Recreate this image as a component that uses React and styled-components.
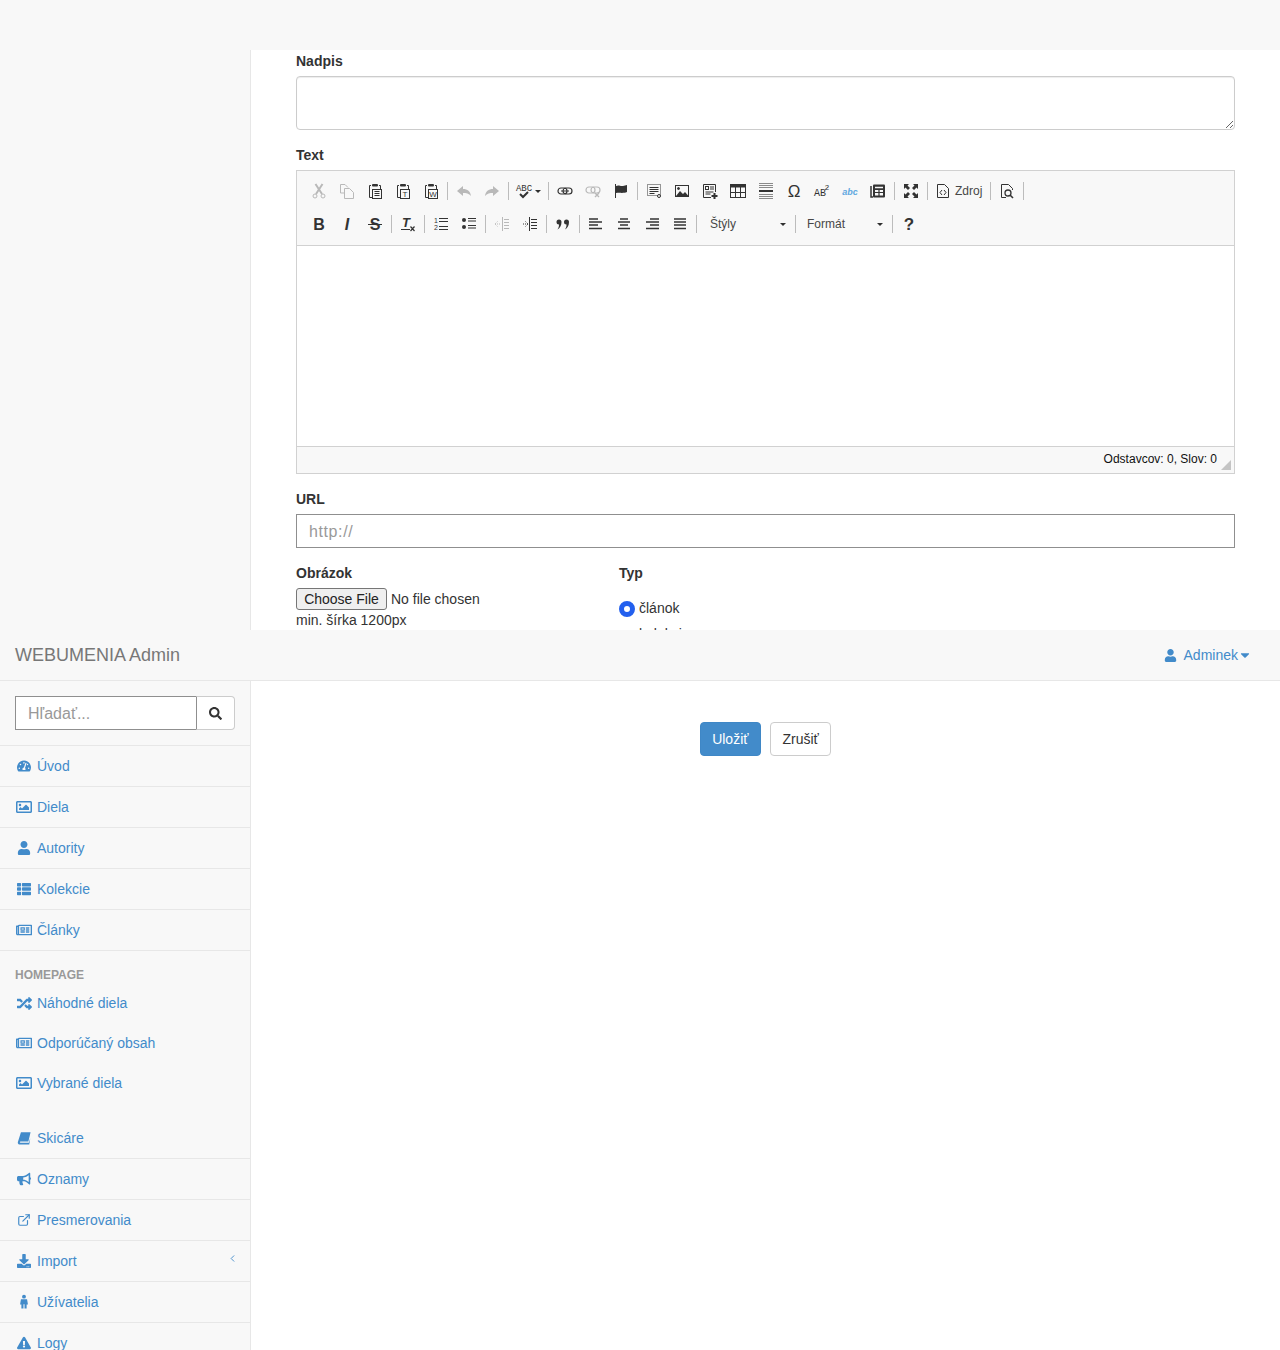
import React from 'react';
import styled, { createGlobalStyle } from 'styled-components';
import {
  FaTachometerAlt, FaRegImage, FaUser, FaThList, FaRegNewspaper, FaRandom,
  FaBullhorn, FaDownload, FaExclamationTriangle, FaSearch, FaCaretDown,
} from 'react-icons/fa';
import { FiExternalLink, FiChevronLeft } from 'react-icons/fi';

const GlobalStyle = createGlobalStyle`
  html, body { margin: 0; padding: 0; background: #fff; }
  body {
    font-family: "Liberation Sans", Arial, sans-serif;
    font-size: 14px;
    line-height: 20px;
    color: #333;
  }
  * { box-sizing: border-box; }
`;

const Page = styled.div`
  height: 1350px;
  overflow: hidden;
  display: flex;
  flex-direction: column;
`;

const TopBand = styled.div`
  height: 50px;
  flex: none;
  background: #f8f8f8;
`;

const Row = styled.div`
  display: flex;
  flex: ${(p) => (p.$fill ? '1' : 'none')};
  height: ${(p) => (p.$h ? `${p.$h}px` : 'auto')};
  overflow: hidden;
`;

const Sidebar = styled.aside`
  width: 251px;
  flex: none;
  background: #f8f8f8;
  border-right: 1px solid #e7e7e7;
`;

const Content = styled.main`
  flex: 1;
  padding: 1px 45px 0;
`;

const Group = styled.div`
  margin-bottom: 15px;
`;

const Label = styled.label`
  display: block;
  font-weight: 700;
  margin-bottom: 5px;
`;

const Area = styled.textarea`
  display: block;
  width: 100%;
  height: 54px;
  border: 1px solid #ccc;
  border-radius: 4px;
  box-shadow: inset 0 1px 1px rgba(0, 0, 0, 0.075);
  background: #fff;
  outline: none;
`;

const Editor = styled.div`
  border: 1px solid #d1d1d1;
`;

const Toolbar = styled.div`
  background: #f8f8f8;
  padding: 3px 0 5px 8px;
  border-bottom: 1px solid #d1d1d1;
`;

const ToolRow = styled.div`
  display: flex;
  align-items: center;
  height: ${(p) => p.$h}px;
`;

const Tool = styled.span`
  flex: none;
  width: ${(p) => p.$w || 28}px;
  height: 18px;
  display: flex;
  align-items: center;
  justify-content: ${(p) => (p.$w ? 'flex-start' : 'center')};
  padding-left: ${(p) => (p.$w ? '5px' : '0')};
  color: ${(p) => (p.$off ? '#b9b9b9' : '#333')};
  font-size: 12px;
  svg { flex: none; display: block; overflow: visible; }
`;

const ToolText = styled.span`
  margin-left: 4px;
  color: #474747;
`;

const ToolCaret = styled.i`
  flex: none;
  margin-left: 3px;
  border-top: 3px solid #2f2f2f;
  border-left: 3px solid transparent;
  border-right: 3px solid transparent;
`;

const Sep = styled.span`
  flex: none;
  width: 1px;
  height: 18px;
  margin: 0 2px;
  background: #bcbcbc;
`;

const Combo = styled.span`
  flex: none;
  width: ${(p) => p.$w}px;
  padding-left: ${(p) => p.$pad}px;
  padding-right: 7px;
  display: flex;
  align-items: center;
  justify-content: space-between;
  font-size: 12px;
  color: #474747;
`;

const EditorBody = styled.div`
  height: 200px;
  background: #fff;
`;

const EditorFoot = styled.div`
  height: 27px;
  padding: 0 3px 3px 0;
  background: #f8f8f8;
  border-top: 1px solid #d1d1d1;
  display: flex;
  align-items: center;
  justify-content: flex-end;
  font-size: 12px;
  color: #111;
`;

const Grip = styled.i`
  width: 0;
  height: 0;
  margin: 13px 0 0 4px;
  border-bottom: 10px solid #c4c4c4;
  border-left: 10px solid transparent;
`;

const UrlInput = styled.input`
  display: block;
  width: 100%;
  height: 34px;
  padding: 7px 12px 5px;
  border: 1px solid #8f8f8f;
  font: 16px "Liberation Sans", Arial, sans-serif;
  outline: none;
  &::placeholder { color: #999; letter-spacing: 0.6px; }
`;

const Columns = styled.div`
  display: grid;
  grid-template-columns: 323px 1fr;
`;

const FileInput = styled.input`
  display: block;
  height: 22px;
  font: 14px "Liberation Sans", Arial, sans-serif;
  color: #333;
  &::file-selector-button {
    width: 91px;
    height: 22px;
    margin-right: 4px;
    padding: 0;
    background: #efefef;
    border: 1px solid #767676;
    border-radius: 3px;
    font: 14px "Liberation Sans", Arial, sans-serif;
    color: #222;
  }
`;

const Hint = styled.p`
  margin: 0;
`;

const RadioRow = styled.label`
  display: flex;
  align-items: flex-start;
  height: 20px;
  margin-top: ${(p) => p.$top}px;
`;

const Radio = styled.input`
  appearance: none;
  width: 16px;
  height: 16px;
  margin: ${(p) => p.$drop}px 4px 0 0;
  border-radius: 50%;
  background: #fff;
  border: 1px solid #767676;
  &:checked { border: 5px solid #2360ee; }
`;

const NavBar = styled.header`
  height: 51px;
  flex: none;
  padding: 0 28px 0 15px;
  background: #f8f8f8;
  border-bottom: 1px solid #e7e7e7;
  display: flex;
  align-items: center;
  justify-content: space-between;
`;

const Brand = styled.a`
  font-size: 18px;
  color: #777;
`;

const UserMenu = styled.a`
  display: flex;
  align-items: center;
  color: #428bca;
`;

const UserName = styled.span`
  margin-left: 7px;
`;

const SearchBox = styled.div`
  display: flex;
  height: 65px;
  padding: 15px;
  border-bottom: 1px solid #e7e7e7;
`;

const SearchInput = styled.input`
  width: 181px;
  height: 34px;
  padding: 7px 12px 5px;
  border: 1px solid #8f8f8f;
  border-right: 0;
  font: 16px "Liberation Sans", Arial, sans-serif;
  outline: none;
  &::placeholder { color: #999; }
`;

const SearchButton = styled.span`
  width: 39px;
  height: 34px;
  display: flex;
  align-items: center;
  justify-content: center;
  background: #fff;
  border: 1px solid #ccc;
  border-left: 1px solid #8f8f8f;
  border-radius: 0 4px 4px 0;
  color: #333;
`;

const NavItem = styled.a`
  display: flex;
  align-items: center;
  height: ${(p) => (p.$plain ? 40 : 41)}px;
  padding: 0 0 ${(p) => (p.$plain ? 0 : 1)}px 15px;
  color: #428bca;
  border-bottom: ${(p) => (p.$plain ? '0' : '1px solid #e7e7e7')};
`;

const NavIcon = styled.span`
  width: 18px;
  margin-right: 4px;
  display: flex;
  justify-content: center;
  flex: none;
`;

const NavArrow = styled.span`
  margin: 0 12px 5px auto;
  display: flex;
`;

const NavHeading = styled.div`
  padding-top: 15px;
  height: 32px;
  margin-left: 15px;
  font-size: 12px;
  line-height: 18px;
  font-weight: 700;
  color: #999;
`;

const SubGap = styled.div`
  height: 15px;
`;

const Actions = styled.div`
  flex: 1;
  padding-top: 41px;
  display: flex;
  justify-content: center;
  align-items: flex-start;
  gap: 9px;
`;

const Button = styled.button`
  height: 34px;
  padding: 6px 11.5px;
  border-radius: 4px;
  border: 1px solid ${(p) => (p.$primary ? '#3f87c6' : '#ccc')};
  background: ${(p) => (p.$primary ? '#428bca' : '#fff')};
  color: ${(p) => (p.$primary ? '#fff' : '#333')};
  font: 14px "Liberation Sans", Arial, sans-serif;
`;

const Svg = ({ children, size = 16 }) => (
  <svg width={size} height={size} viewBox="0 0 16 16" fill="none" stroke="currentColor" strokeWidth="1">
    {children}
  </svg>
);

const Glyph = ({ x = 8, y = 13, size = 15, weight = 700, style = 'normal', family = 'Liberation Sans', children, fill = 'currentColor' }) => (
  <text x={x} y={y} textAnchor="middle" fontSize={size} fontWeight={weight} fontStyle={style} fontFamily={family} fill={fill} stroke="none">
    {children}
  </text>
);

const Clip = ({ children }) => (
  <Svg>
    <path d="M4 2.500H2.500v12H5M12 2.500h1.500V6" />
    <rect x="5" y="1" width="6" height="2.500" rx="1" fill="currentColor" stroke="none" />
    <rect x="5.500" y="6.500" width="9" height="9" fill="#f8f8f8" />
    {children}
  </Svg>
);

const icons = {
  cut: (
    <Svg>
      <circle cx="4" cy="13" r="2" />
      <circle cx="12" cy="13" r="2" />
      <path d="M5 11 11.500 1M11 11 4.500 1" strokeWidth="2" />
    </Svg>
  ),
  copy: (
    <Svg>
      <path d="M5 10H1.500V1.500H6L9 4.500" />
      <path d="M5.500 5.500h5l4 4v6h-9z" fill="#f8f8f8" />
    </Svg>
  ),
  paste: <Clip><path d="M7.500 8.500h5M7.500 10.500h5M7.500 12.500h5" /></Clip>,
  pasteText: <Clip><Glyph x={10} y={14} size={8} weight={400}>T</Glyph></Clip>,
  pasteWord: <Clip><Glyph x={10} y={14} size={8} weight={400}>W</Glyph></Clip>,
  undo: (
    <Svg>
      <path d="M7 3 1 8l6 5v-3c3 0 6 .5 8 3-.5-4.500-3.500-7-8-7z" fill="currentColor" stroke="none" />
    </Svg>
  ),
  redo: (
    <Svg>
      <path d="M9 3l6 5-6 5v-3c-3 0-6 .5-8 3 .5-4.500 3.500-7 8-7z" fill="currentColor" stroke="none" />
    </Svg>
  ),
  spell: (
    <Svg>
      <Glyph y={8} size={9} weight={400} family="Liberation Mono">ABC</Glyph>
      <path d="M4 11l3 3 5-5" strokeWidth="2" />
    </Svg>
  ),
  link: (
    <Svg>
      <rect x="1" y="5" width="9" height="6" rx="3" strokeWidth="1.200" />
      <rect x="6" y="5" width="9" height="6" rx="3" strokeWidth="1.200" />
      <path d="M4 8h8" />
    </Svg>
  ),
  unlink: (
    <Svg>
      <rect x="1" y="4" width="9" height="6" rx="3" strokeWidth="1.200" />
      <rect x="6" y="4" width="9" height="6" rx="3" strokeWidth="1.200" />
      <path d="M10 10l4 4M14 10l-4 4" strokeWidth="1.400" />
    </Svg>
  ),
  anchor: (
    <Svg>
      <path d="M2.500 1v14" />
      <path d="M3 3c3-1.500 4 .5 7 0l4-1v7c-3 1.500-7 .500-11 1z" fill="currentColor" stroke="none" />
    </Svg>
  ),
  form: (
    <Svg>
      <rect x="1.500" y="1.500" width="13" height="11" strokeDasharray="1 1" />
      <path d="M3.500 4.500h9M3.500 6.500h9M3.500 8.500h9M3.500 10.500h5" />
      <circle cx="13" cy="13" r="1.500" fill="#f8f8f8" />
    </Svg>
  ),
  image: (
    <Svg>
      <rect x="1.500" y="2.500" width="13" height="11" />
      <circle cx="4.500" cy="5.500" r="1" fill="currentColor" />
      <path d="M2 13l4-5 3 3 2-2 3.500 4z" fill="currentColor" stroke="none" />
    </Svg>
  ),
  template: (
    <Svg>
      <path d="M9 14.500H1.500v-13h12V9" />
      <rect x="3.500" y="3.500" width="3" height="3" />
      <path d="M8 4h4M8 6h4M3.500 9h8M3.500 11h5" />
      <path d="M12.500 10v6M9.500 13h6" strokeWidth="2" />
    </Svg>
  ),
  table: (
    <Svg>
      <rect x="0.500" y="1.500" width="15" height="13" />
      <path d="M1 3h14" strokeWidth="3" />
      <path d="M5.500 2v12M10.500 2v12M1 9.500h14" />
    </Svg>
  ),
  hr: (
    <Svg>
      <path d="M1 0.500h14M1 2.500h14M1 4.500h14M1 11.500h14M1 13.500h14M1 15.500h14" stroke="#8a8a8a" />
      <path d="M1 8h14" strokeWidth="2" />
    </Svg>
  ),
  omega: <Svg><Glyph y={14} size={17} weight={400}>Ω</Glyph></Svg>,
  abbr: (
    <Svg>
      <Glyph x={6} y={13} size={10} weight={400} family="Liberation Mono">AB</Glyph>
      <Glyph x={13} y={7} size={8} weight={400} family="Liberation Mono">2</Glyph>
    </Svg>
  ),
  scayt: <Svg><Glyph y={12} size={9} style="italic" fill="#62a8e0">abc</Glyph></Svg>,
  news: (
    <Svg>
      <path d="M1 3v11h2" strokeWidth="1.500" />
      <rect x="3" y="1.500" width="12" height="13" rx="1" fill="currentColor" stroke="none" />
      <path d="M5 4.500h8" stroke="#f8f8f8" strokeWidth="1.500" />
      <rect x="5" y="7" width="8" height="5.500" fill="#f8f8f8" stroke="none" />
      <path d="M5 9.500h8M9 7v6" strokeWidth="1.200" />
    </Svg>
  ),
  maximize: (
    <Svg>
      <path d="M1 1h5L4.500 2.500 7 5 5 7 2.500 4.500 1 6zM15 1v5l-1.500-1.500L11 7 9 5l2.500-2.500L10 1zM1 15v-5l1.500 1.500L5 9l2 2-2.500 2.500L6 15zM15 15h-5l1.500-1.500L9 11l2-2 2.500 2.500L15 10z" fill="currentColor" stroke="none" />
    </Svg>
  ),
  source: (
    <Svg>
      <path d="M2.500 1.500h7l4 4v9h-11z" />
      <path d="M7 7 5 9.500 7 12M9 7l2 2.500L9 12" />
    </Svg>
  ),
  preview: (
    <Svg>
      <path d="M7 14.500H2.500v-13h7l4 4V7" />
      <circle cx="9" cy="10" r="3" strokeWidth="1.300" />
      <path d="M11 12l3 3" strokeWidth="1.600" />
    </Svg>
  ),
  bold: <Svg><Glyph y={14} size={16}>B</Glyph></Svg>,
  italic: <Svg><Glyph y={14} size={16} style="italic">I</Glyph></Svg>,
  strike: (
    <Svg>
      <Glyph y={14} size={16}>S</Glyph>
      <path d="M1 8.500h14" />
    </Svg>
  ),
  clear: (
    <Svg>
      <Glyph x={6} y={11} size={13} style="italic">T</Glyph>
      <path d="M1 13.500h9M10.500 10.500l4 4.500M14.500 10.500l-4 4.500" strokeWidth="1.200" />
    </Svg>
  ),
  ol: (
    <Svg>
      <Glyph x={3} y={7} size={7} weight={400}>1</Glyph>
      <Glyph x={3} y={14} size={7} weight={400}>2</Glyph>
      <path d="M6 2.500h9M6 5.500h9M6 10.500h9M6 13.500h9" />
    </Svg>
  ),
  ul: (
    <Svg>
      <circle cx="3" cy="4" r="2" fill="currentColor" stroke="none" />
      <circle cx="3" cy="11" r="2" fill="currentColor" stroke="none" />
      <path d="M7 2.500h8M7 5h8M7 9.500h8M7 12h8" />
    </Svg>
  ),
  outdent: (
    <Svg>
      <path d="M8.500 1v14" />
      <path d="M10 3.500h5M10 6.500h5M10 9.500h5M10 12.500h5" />
      <path d="M1 8h5M3.500 5.500 1 8l2.500 2.500" strokeDasharray="1 1" />
    </Svg>
  ),
  indent: (
    <Svg>
      <path d="M7.500 1v14" />
      <path d="M9 3.500h6M9 6.500h6M9 9.500h6M9 12.500h6" />
      <path d="M1 8h5M3.500 5.500 6 8l-2.500 2.500" strokeDasharray="1 1" />
    </Svg>
  ),
  quote: (
    <Svg>
      <path d="M4 3.500a2.500 2.500 0 0 1 2.500 2.500c0 3.500-1.500 6-4 7.500 1-1.500 1.500-3 1.500-5A2.500 2.500 0 0 1 4 3.500zM11.500 3.500A2.500 2.500 0 0 1 14 6c0 3.500-1.500 6-4 7.500 1-1.500 1.500-3 1.500-5a2.500 2.500 0 0 1 0-5z" fill="currentColor" stroke="none" />
    </Svg>
  ),
  left: <Svg><path d="M1 3h9M1 6h13M1 9h9M1 12.500h13" strokeWidth="1.500" /></Svg>,
  center: <Svg><path d="M4 3h8M2 6h12M4 9h8M2 12.500h12" strokeWidth="1.500" /></Svg>,
  right: <Svg><path d="M6 3h9M2 6h13M6 9h9M2 12.500h13" strokeWidth="1.500" /></Svg>,
  justify: <Svg><path d="M2 3h12M2 6h12M2 9h12M2 12.500h12" strokeWidth="1.500" /></Svg>,
  help: <Svg><Glyph y={14} size={17}>?</Glyph></Svg>,
};

const rowOne = [
  ['cut', 1], ['copy', 1], ['paste'], ['pasteText'], ['pasteWord'], '|',
  ['undo', 1], ['redo', 1], '|',
  'spell', '|',
  ['link'], ['unlink', 1], ['anchor'], '|',
  ['form'], ['image'], ['template'], ['table'], ['hr'], ['omega'], ['abbr'], ['scayt'], ['news'], '|',
  ['maximize'], '|',
  'source', '|',
  ['preview'], '|',
];

const rowTwo = [
  ['bold'], ['italic'], ['strike'], '|',
  ['clear'], '|',
  ['ol'], ['ul'], '|',
  ['outdent', 1], ['indent'], '|',
  ['quote'], '|',
  ['left'], ['center'], ['right'], ['justify'], '|',
  'styles', '|',
  'format', '|',
  ['help'],
];

const renderTool = (item, i) => {
  if (item === '|') return <Sep key={i} />;
  if (item === 'spell') return <Tool key={i} $w={35}>{icons.spell}<ToolCaret /></Tool>;
  if (item === 'source') return <Tool key={i} $w={58}>{icons.source}<ToolText>Zdroj</ToolText></Tool>;
  if (item === 'styles') return <Combo key={i} $w={94} $pad={11}>Štýly<ToolCaret /></Combo>;
  if (item === 'format') return <Combo key={i} $w={92} $pad={9}>Formát<ToolCaret /></Combo>;
  return <Tool key={i} $off={item[1]}>{icons[item[0]]}</Tool>;
};

// FA5 has no slanted book or wide male figure like the old set
const BookIcon = () => (
  <svg width="14" height="14" viewBox="0 0 16 16" fill="currentColor">
    <path d="M4.500 1.500H15.500L13 12H4c-1 0-1 1.500 0 1.500h9.500l1.500-5v1l-1 6H3.500C1.500 15.500.5 14 1 12.500z" />
  </svg>
);

const MaleIcon = () => (
  <svg width="14" height="15" viewBox="0 0 16 16" fill="currentColor">
    <circle cx="8" cy="2.500" r="2.200" />
    <path d="M4.500 5.500h7l1 6H11V16H8.600v-5h-1.200v5H5v-4.500H3.500z" />
  </svg>
);

const WideImage = () => <FaRegImage size={16} />;
const WideNews = () => <FaRegNewspaper size={16} />;
const WideRandom = () => <FaRandom size={15} />;

const mainNav = [
  [FaTachometerAlt, 'Úvod'],
  [WideImage, 'Diela'],
  [FaUser, 'Autority'],
  [FaThList, 'Kolekcie'],
  [WideNews, 'Články'],
];

const homeNav = [
  [WideRandom, 'Náhodné diela'],
  [WideNews, 'Odporúčaný obsah'],
  [WideImage, 'Vybrané diela'],
];

const lowerNav = [
  [BookIcon, 'Skicáre'],
  [FaBullhorn, 'Oznamy'],
  [FiExternalLink, 'Presmerovania'],
  [FaDownload, 'Import', true],
  [MaleIcon, 'Užívatelia'],
  [FaExclamationTriangle, 'Logy'],
];

const Item = ({ icon: Icon, label, plain, arrow }) => (
  <NavItem $plain={plain}>
    <NavIcon><Icon size={14} /></NavIcon>
    {label}
    {arrow && <NavArrow><FiChevronLeft size={11} /></NavArrow>}
  </NavItem>
);

export default function App() {
  return (
    <Page>
      <GlobalStyle />
      <TopBand />
      <Row $h={580}>
        <Sidebar />
        <Content>
          <Group>
            <Label>Nadpis</Label>
            <Area />
          </Group>
          <Group>
            <Label>Text</Label>
            <Editor>
              <Toolbar>
                <ToolRow $h={34}>{rowOne.map(renderTool)}</ToolRow>
                <ToolRow $h={32}>{rowTwo.map(renderTool)}</ToolRow>
              </Toolbar>
              <EditorBody />
              <EditorFoot>
                Odstavcov: 0, Slov: 0
                <Grip />
              </EditorFoot>
            </Editor>
          </Group>
          <Group>
            <Label>URL</Label>
            <UrlInput placeholder="http://" />
          </Group>
          <Columns>
            <div>
              <Label>Obrázok</Label>
              <FileInput type="file" />
              <Hint>min. šírka 1200px</Hint>
            </div>
            <div>
              <Label>Typ</Label>
              <RadioRow $top={15}><Radio type="radio" name="typ" $drop={3} defaultChecked />článok</RadioRow>
              <RadioRow $top={6}><Radio type="radio" name="typ" $drop={7} />kolekcia</RadioRow>
            </div>
          </Columns>
        </Content>
      </Row>
      <NavBar>
        <Brand>WEBUMENIA Admin</Brand>
        <UserMenu>
          <FaUser size={13} />
          <UserName>Adminek</UserName>
          <FaCaretDown size={14} />
        </UserMenu>
      </NavBar>
      <Row $fill>
        <Sidebar>
          <SearchBox>
            <SearchInput placeholder="Hľadať..." />
            <SearchButton><FaSearch size={13} /></SearchButton>
          </SearchBox>
          {mainNav.map(([icon, label]) => <Item key={label} icon={icon} label={label} />)}
          <NavHeading>HOMEPAGE</NavHeading>
          {homeNav.map(([icon, label]) => <Item key={label} icon={icon} label={label} plain />)}
          <SubGap />
          {lowerNav.map(([icon, label, arrow]) => <Item key={label} icon={icon} label={label} arrow={arrow} />)}
        </Sidebar>
        <Actions>
          <Button $primary>Uložiť</Button>
          <Button>Zrušiť</Button>
        </Actions>
      </Row>
    </Page>
  );
}
